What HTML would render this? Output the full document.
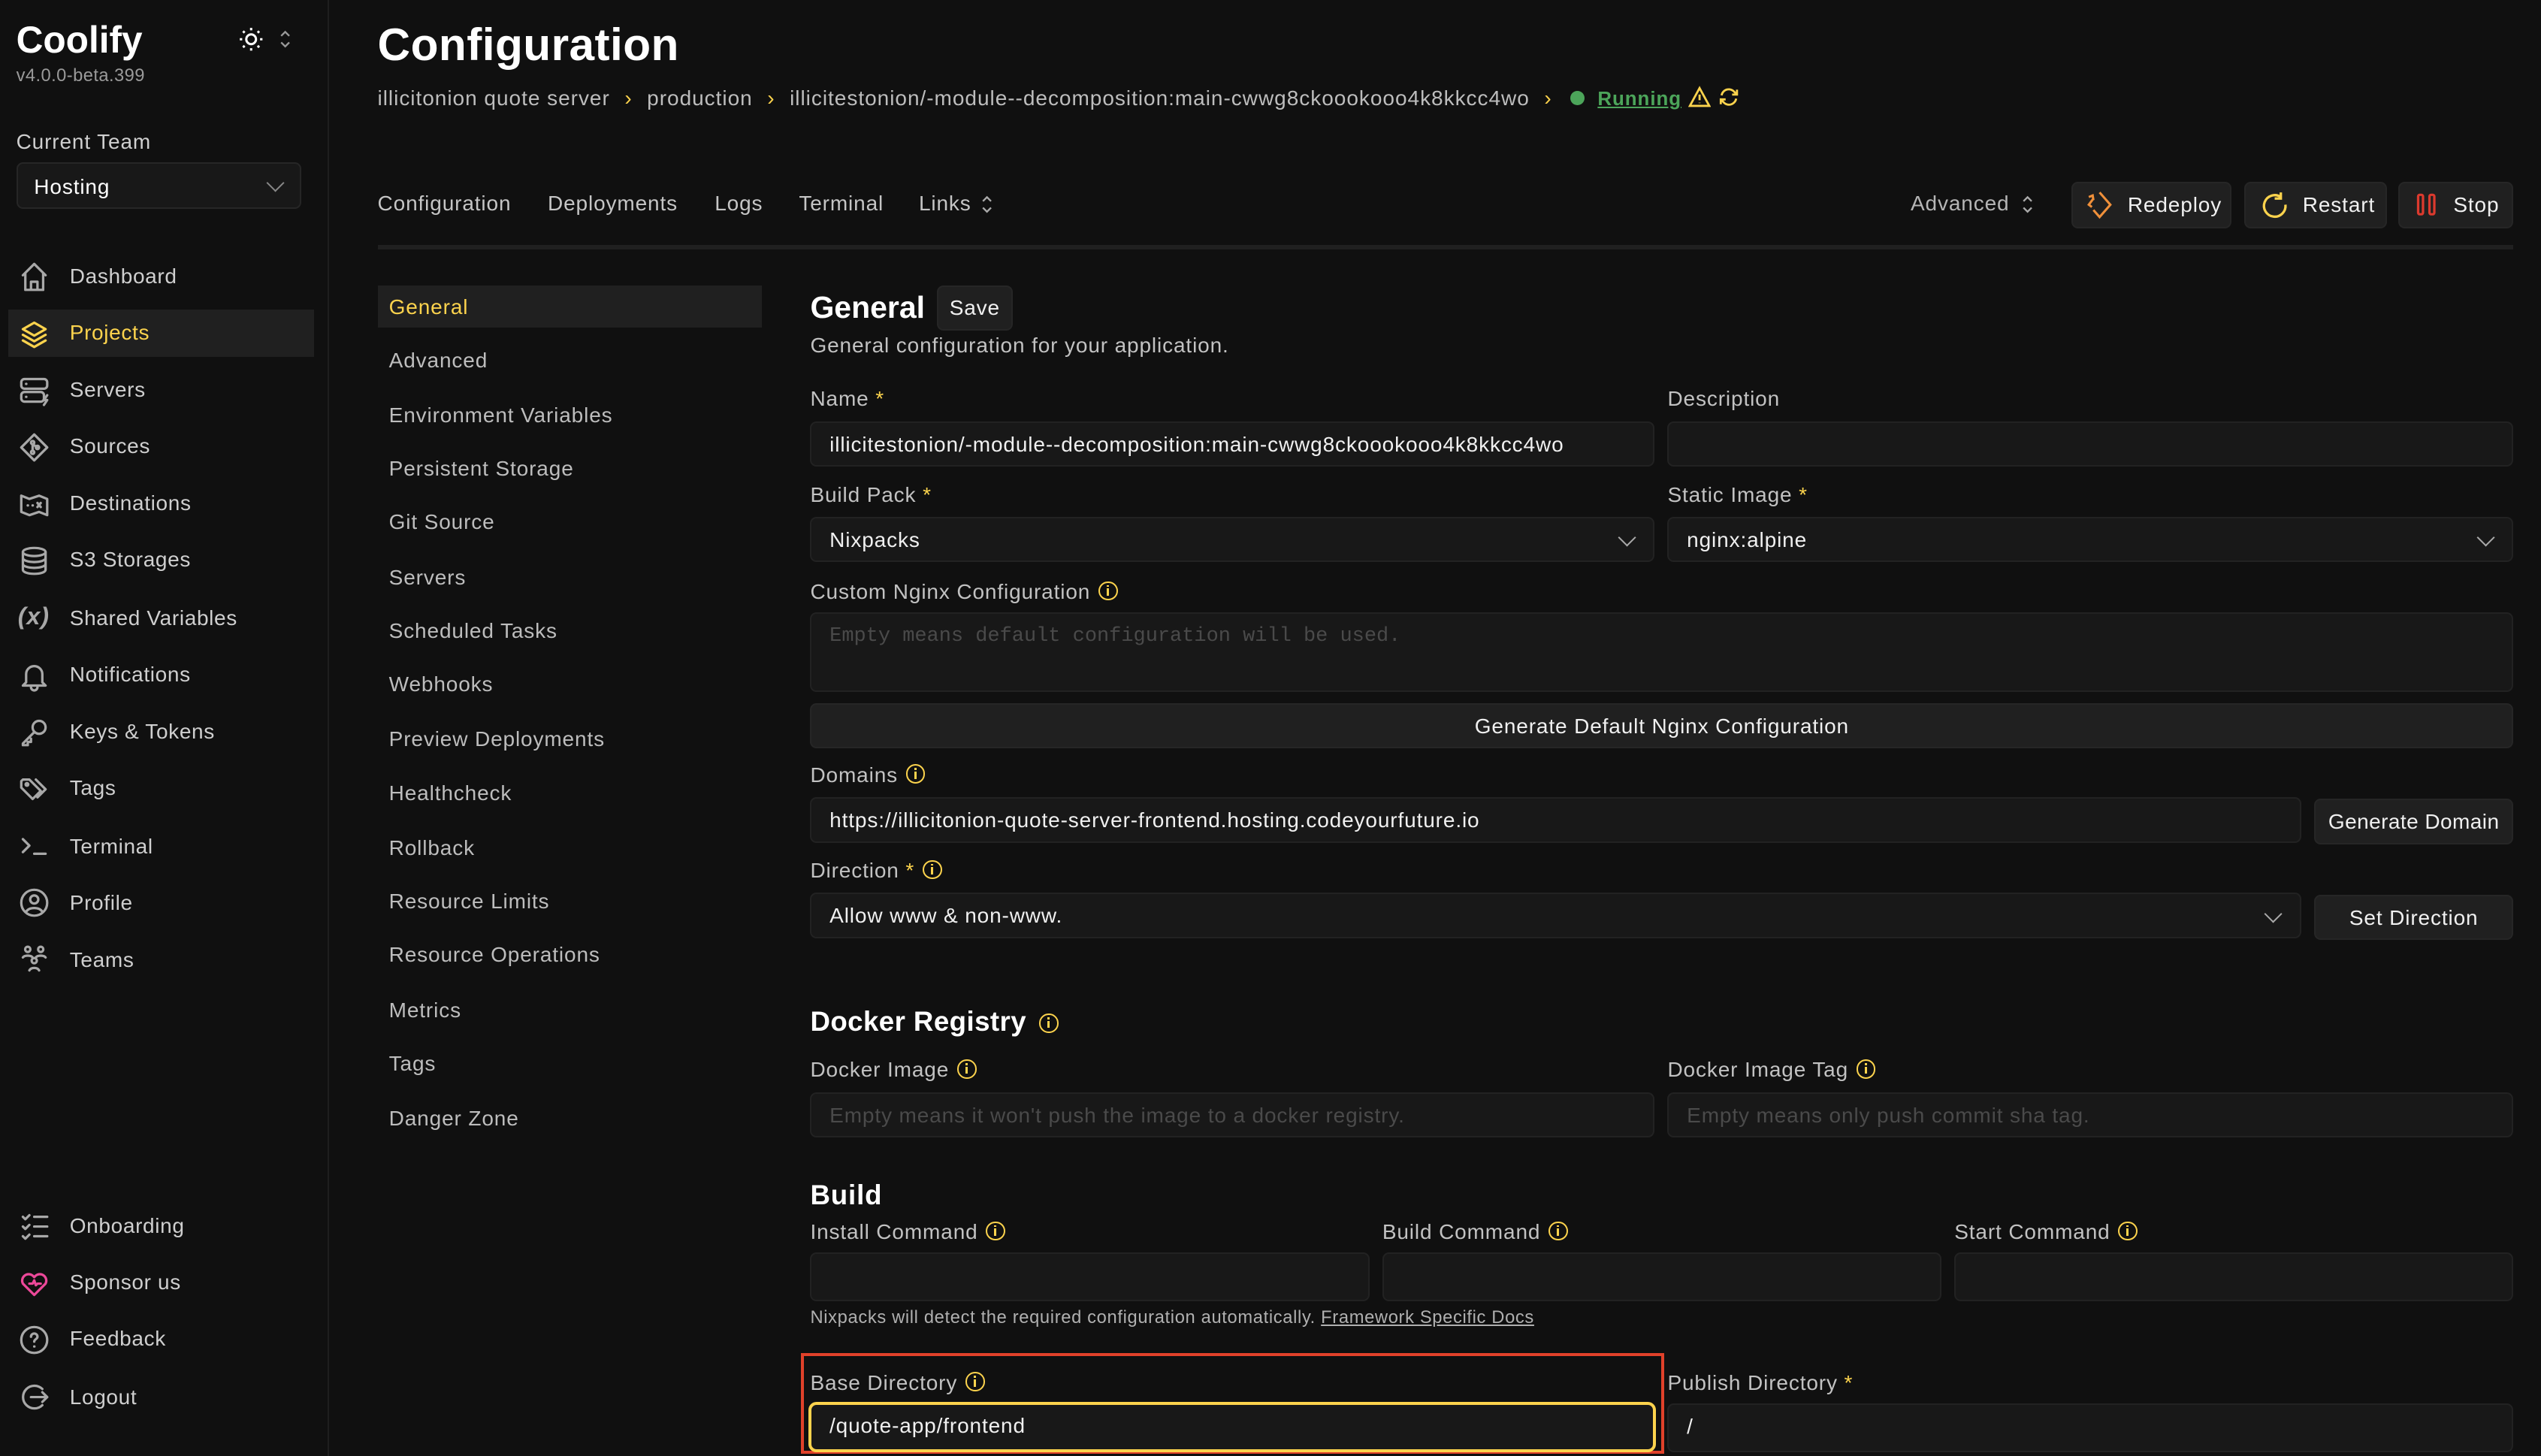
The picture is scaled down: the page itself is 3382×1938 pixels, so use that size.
<!DOCTYPE html>
<html><head><meta charset="utf-8"><style>
html,body{margin:0;padding:0;background:#101010;width:3382px;height:1938px;overflow:hidden}
#w{position:relative;width:1568px;height:899px;zoom:2.15689;font-family:"Liberation Sans",sans-serif;color:#e5e5e5;font-size:13px;letter-spacing:.4px}
.a{position:absolute;white-space:nowrap}
.side{position:absolute;left:0;top:0;width:202px;height:899px;border-right:1px solid #1e1e1e}
.nav{position:absolute;left:43px;font-size:13px;color:#cfcfcf;letter-spacing:.3px}
.ic{position:absolute;left:11px;width:20px;height:20px}
.ic svg{width:20px;height:20px;fill:none;stroke:#a8a8a8;stroke-width:1.5;stroke-linecap:round;stroke-linejoin:round}
.sub{position:absolute;left:240px;font-size:13px;color:#bdbdbd}
.lbl{position:absolute;font-size:13px;color:#c2c2c2}
.st{color:#fcd34d}
.inp{position:absolute;height:28px;background:#181818;border:1px solid #222;border-radius:4px;box-sizing:border-box;padding-left:11px;line-height:27px;font-size:13px;color:#f0f0f0;overflow:hidden;white-space:nowrap}
.ph{color:#4a4a4a}
.btn{position:absolute;background:#202020;border:1px solid #262626;border-radius:4px;box-sizing:border-box;font-size:13px;color:#f0f0f0;text-align:center}
.i{display:inline-block;width:10px;height:10px;border:1.3px solid #fcd34d;border-radius:50%;vertical-align:-1px;margin-left:5px;position:relative}
.i:after{content:"";position:absolute;left:4.2px;top:3.5px;width:1.3px;height:4.5px;background:#fcd34d}
.i:before{content:"";position:absolute;left:4.2px;top:1.3px;width:1.3px;height:1.3px;background:#fcd34d}
.chev{position:absolute;width:7px;height:7px;border-right:1.3px solid #aaa;border-bottom:1.3px solid #aaa;transform:rotate(45deg)}
</style></head><body><div id="w">
<div class="side">
 <div class="a" style="left:10px;top:11px;font-size:23px;font-weight:bold;color:#fff;letter-spacing:0">Coolify</div>
 <div class="a" style="left:10px;top:41px;font-size:11px;color:#9a9a9a;letter-spacing:.2px">v4.0.0-beta.399</div>
 <svg class="a" style="left:147px;top:16px" width="16" height="16" viewBox="0 0 16 16" fill="none" stroke="#fff" stroke-width="1.4"><circle cx="8" cy="8" r="3"/><path d="M8 1v1.5M8 13.5V15M1 8h1.5M13.5 8H15M3 3l1 1M12 12l1 1M3 13l1-1M12 4l1-1"/></svg>
 <svg class="a" style="left:172px;top:17px" width="8" height="14" viewBox="0 0 8 14" fill="none" stroke="#999" stroke-width="1.1"><path d="M1.5 5L4 2.5 6.5 5M1.5 9L4 11.5 6.5 9"/></svg>
 <div class="a" style="left:10px;top:80px;font-size:13px;color:#cfcfcf">Current Team</div>
 <div class="a" style="left:10px;top:100px;width:176px;height:29px;background:#181818;border:1px solid #262626;border-radius:4px;box-sizing:border-box"></div>
 <div class="a" style="left:21px;top:108px;font-size:13px;color:#fff">Hosting</div>
 <div class="chev" style="left:166px;top:109px;border-color:#888"></div>
 <div class="a" style="left:5px;top:191px;width:189px;height:29px;background:#202020"></div>

 <div class="ic" style="top:161px"><svg viewBox="0 0 20 20"><path d="M3 9l7-7 7 7M4.5 8v10h11V8M8 18v-5h4v5"/></svg></div><div class="nav" style="top:163px">Dashboard</div>
 <div class="ic" style="top:196px"><svg viewBox="0 0 20 20" style="stroke:#fcd34d"><path d="M10 3l7 4-7 4-7-4z M3 10.5l7 4 7-4M3 14l7 4 7-4"/></svg></div><div class="nav" style="top:198px;color:#fcd34d">Projects</div>
 <div class="ic" style="top:231px"><svg viewBox="0 0 20 20"><rect x="2" y="3" width="16" height="6" rx="2"/><rect x="2" y="11" width="14" height="6" rx="2"/><path d="M5 6h.1M5 14h.1M18 13l-2 3h2l-2 3"/></svg></div><div class="nav" style="top:233px">Servers</div>
 <div class="ic" style="top:266px"><svg viewBox="0 0 20 20"><path d="M10 2l8 8-8 8-8-8z"/><circle cx="9" cy="7" r="1"/><circle cx="9" cy="13" r="1"/><circle cx="12" cy="10" r="1"/><path d="M9 8v4M9 8l3 2"/></svg></div><div class="nav" style="top:268px">Sources</div>
 <div class="ic" style="top:301px"><svg viewBox="0 0 20 20"><path d="M2 5l5 2 6-2 5 2v10l-5-2-6 2-5-2z M6 11h.1M9 11h.1M12 9.5l2 2.5M14 9.5l-2 2.5"/></svg></div><div class="nav" style="top:303px">Destinations</div>
 <div class="ic" style="top:336px"><svg viewBox="0 0 20 20"><ellipse cx="10" cy="4.5" rx="7" ry="2.5"/><path d="M3 4.5v11c0 1.4 3 2.5 7 2.5s7-1.1 7-2.5v-11M3 8.2c0 1.4 3 2.5 7 2.5s7-1.1 7-2.5M3 11.8c0 1.4 3 2.5 7 2.5s7-1.1 7-2.5"/></svg></div><div class="nav" style="top:338px">S3 Storages</div>
 <div class="a" style="left:11px;top:372px;font-size:15px;font-weight:bold;color:#a8a8a8;font-style:italic">(x)</div><div class="nav" style="top:374px">Shared Variables</div>
 <div class="ic" style="top:407px"><svg viewBox="0 0 20 20"><path d="M5 14V9a5 5 0 0110 0v5l2 2H3zM8 17a2 2 0 004 0"/></svg></div><div class="nav" style="top:409px">Notifications</div>
 <div class="ic" style="top:442px"><svg viewBox="0 0 20 20"><circle cx="13" cy="7" r="4"/><path d="M10 10l-7 7v1h3v-2h2v-2"/></svg></div><div class="nav" style="top:444px">Keys &amp; Tokens</div>
 <div class="ic" style="top:477px"><svg viewBox="0 0 20 20"><path d="M2 5v4l7 7 5-5-7-7H3zM11 4l6 6-5 5"/><circle cx="5.5" cy="7" r=".8"/></svg></div><div class="nav" style="top:479px">Tags</div>
 <div class="ic" style="top:512px"><svg viewBox="0 0 20 20"><path d="M3 6l4 4-4 4M10 15h7"/></svg></div><div class="nav" style="top:515px">Terminal</div>
 <div class="ic" style="top:547px"><svg viewBox="0 0 20 20"><circle cx="10" cy="10" r="8"/><circle cx="10" cy="8" r="2.5"/><path d="M5 15.5c2-3 8-3 10 0"/></svg></div><div class="nav" style="top:550px">Profile</div>
 <div class="ic" style="top:582px"><svg viewBox="0 0 20 20"><circle cx="6" cy="4" r="1.6"/><circle cx="14" cy="4" r="1.6"/><circle cx="10" cy="11" r="1.6"/><path d="M3 9c1-1.5 5-1.5 6 0M11 9c1-1.5 5-1.5 6 0M7 17c1-2 5-2 6 0"/></svg></div><div class="nav" style="top:585px">Teams</div>

 <div class="ic" style="top:747px"><svg viewBox="0 0 20 20"><path d="M3 4l1.5 1.5L7 3M3 10l1.5 1.5L7 9M3 16l1.5 1.5L7 15M10 4h8M10 10h8M10 16h8"/></svg></div><div class="nav" style="top:749px">Onboarding</div>
 <div class="ic" style="top:782px"><svg viewBox="0 0 20 20" style="stroke:#ec4899"><path d="M10 17l-7-7a4 4 0 016-5l1 1 1-1a4 4 0 016 5zM7 10h2l1-2 1 3 1-1h2"/></svg></div><div class="nav" style="top:784px">Sponsor us</div>
 <div class="ic" style="top:817px"><svg viewBox="0 0 20 20"><circle cx="10" cy="10" r="8"/><path d="M8 8a2 2 0 114 0c0 1.5-2 1.5-2 3M10 14h.1"/></svg></div><div class="nav" style="top:819px">Feedback</div>
 <div class="ic" style="top:852px"><svg viewBox="0 0 20 20"><path d="M15 5a7 7 0 100 10M8 10h10M15 7l3 3-3 3"/></svg></div><div class="nav" style="top:855px">Logout</div>
</div>

<div class="a" style="left:233px;top:11px;font-size:28px;font-weight:bold;color:#fff;letter-spacing:.2px">Configuration</div>
<div class="a" style="left:233px;top:53px;font-size:13px;color:#bdbdbd;letter-spacing:.45px">illicitonion quote server <span style="color:#fcd34d;margin:0 5px">›</span> production <span style="color:#fcd34d;margin:0 5px">›</span> illicitestonion/-module--decomposition:main-cwwg8ckoookooo4k8kkcc4wo <span style="color:#fcd34d;margin:0 5px">›</span> <span style="display:inline-block;width:9px;height:9px;border-radius:50%;background:#4ca55a;vertical-align:0;margin:0 4px 0 2px"></span> <b style="color:#4ca55a;text-decoration:underline;font-size:12px">Running</b> <svg style="vertical-align:-2px" width="14" height="14" viewBox="0 0 14 14" fill="none" stroke="#fcd34d" stroke-width="1.3"><path d="M7 1.5l6 11H1z M7 5.5v3.5M7 10.5v.3"/></svg> <svg style="vertical-align:-2px" width="14" height="14" viewBox="0 0 14 14" fill="none" stroke="#fcd34d" stroke-width="1.3"><path d="M2.5 6a4.5 4.5 0 018-2l1.5 1.5M11.5 8a4.5 4.5 0 01-8 2L2 8.5M12 2.5v3H9M2 11.5v-3h3"/></svg></div>

<div class="a" style="left:233px;top:118px;color:#c5c5c5">Configuration</div>
<div class="a" style="left:338px;top:118px;color:#c5c5c5">Deployments</div>
<div class="a" style="left:441px;top:118px;color:#c5c5c5">Logs</div>
<div class="a" style="left:493px;top:118px;color:#c5c5c5">Terminal</div>
<div class="a" style="left:567px;top:118px;color:#c5c5c5">Links</div>
<svg class="a" style="left:605px;top:119px" width="8" height="14" viewBox="0 0 8 14" fill="none" stroke="#aaa" stroke-width="1.1"><path d="M1.5 5L4 2.5 6.5 5M1.5 9L4 11.5 6.5 9"/></svg>
<div class="a" style="left:1179px;top:118px;color:#b5b5b5">Advanced</div>
<svg class="a" style="left:1247px;top:119px" width="8" height="14" viewBox="0 0 8 14" fill="none" stroke="#aaa" stroke-width="1.1"><path d="M1.5 5L4 2.5 6.5 5M1.5 9L4 11.5 6.5 9"/></svg>
<div class="btn" style="left:1278px;top:112px;width:99px;height:29px;line-height:27px;text-align:left;padding-left:34px">Redeploy</div>
<svg class="a" style="left:1286px;top:117px" width="19" height="19" viewBox="0 0 20 20" fill="none" stroke="#f0903a" stroke-width="1.5"><path d="M10 2l7 8-7 8-4-4.6M5 11.5L3 10l3-4M3 5l2.5-1L6 7"/></svg>
<div class="btn" style="left:1385px;top:112px;width:88px;height:29px;line-height:27px;text-align:left;padding-left:35px">Restart</div>
<svg class="a" style="left:1393px;top:117px" width="19" height="19" viewBox="0 0 20 20" fill="none" stroke="#fcd34d" stroke-width="1.6"><path d="M15 5a7 7 0 103 5M15 2v4h-4"/></svg>
<div class="btn" style="left:1480px;top:112px;width:71px;height:29px;line-height:27px;text-align:left;padding-left:33px">Stop</div>
<svg class="a" style="left:1489px;top:118px" width="16" height="16" viewBox="0 0 16 16" fill="none" stroke="#dc3a2e" stroke-width="1.5"><rect x="3" y="2" width="3" height="12" rx="1"/><rect x="10" y="2" width="3" height="12" rx="1"/></svg>
<div class="a" style="left:233px;top:151px;width:1318px;height:3px;background:#202020"></div>

<div class="a" style="left:233px;top:176px;width:237px;height:26px;background:#202020"></div>
<div class="sub" style="top:182px;color:#fcd34d">General</div>
<div class="sub" style="top:215px">Advanced</div>
<div class="sub" style="top:249px">Environment Variables</div>
<div class="sub" style="top:282px">Persistent Storage</div>
<div class="sub" style="top:315px">Git Source</div>
<div class="sub" style="top:349px">Servers</div>
<div class="sub" style="top:382px">Scheduled Tasks</div>
<div class="sub" style="top:415px">Webhooks</div>
<div class="sub" style="top:449px">Preview Deployments</div>
<div class="sub" style="top:482px">Healthcheck</div>
<div class="sub" style="top:516px">Rollback</div>
<div class="sub" style="top:549px">Resource Limits</div>
<div class="sub" style="top:582px">Resource Operations</div>
<div class="sub" style="top:616px">Metrics</div>
<div class="sub" style="top:649px">Tags</div>
<div class="sub" style="top:683px">Danger Zone</div>

<div class="a" style="left:500px;top:179px;font-size:19px;font-weight:bold;color:#fff;letter-spacing:0">General</div>
<div class="btn" style="left:578px;top:176px;width:47px;height:28px;line-height:26px">Save</div>
<div class="a" style="left:500px;top:206px;color:#c2c2c2">General configuration for your application.</div>

<div class="lbl" style="left:500px;top:239px">Name <span class="st">*</span></div>
<div class="lbl" style="left:1029px;top:239px">Description</div>
<div class="inp" style="left:500px;top:260px;width:521px">illicitestonion/-module--decomposition:main-cwwg8ckoookooo4k8kkcc4wo</div>
<div class="inp" style="left:1029px;top:260px;width:522px"></div>

<div class="lbl" style="left:500px;top:298px">Build Pack <span class="st">*</span></div>
<div class="lbl" style="left:1029px;top:298px">Static Image <span class="st">*</span></div>
<div class="inp" style="left:500px;top:319px;width:521px">Nixpacks</div>
<div class="chev" style="left:1000px;top:328px"></div>
<div class="inp" style="left:1029px;top:319px;width:522px">nginx:alpine</div>
<div class="chev" style="left:1530px;top:328px"></div>

<div class="lbl" style="left:500px;top:358px">Custom Nginx Configuration<span class="i"></span></div>
<div class="inp" style="left:500px;top:378px;width:1051px;height:49px;line-height:28px;font-family:'Liberation Mono',monospace;font-size:12.5px;letter-spacing:0"><span class="ph">Empty means default configuration will be used.</span></div>
<div class="btn" style="left:500px;top:434px;width:1051px;height:28px;line-height:27px">Generate Default Nginx Configuration</div>

<div class="lbl" style="left:500px;top:471px">Domains<span class="i"></span></div>
<div class="inp" style="left:500px;top:492px;width:920px">https://illicitonion-quote-server-frontend.hosting.codeyourfuture.io</div>
<div class="btn" style="left:1428px;top:493px;width:123px;height:28px;line-height:27px;letter-spacing:.2px">Generate Domain</div>

<div class="lbl" style="left:500px;top:530px">Direction <span class="st">*</span><span class="i"></span></div>
<div class="inp" style="left:500px;top:551px;width:920px">Allow www &amp; non-www.</div>
<div class="chev" style="left:1399px;top:560px"></div>
<div class="btn" style="left:1428px;top:552px;width:123px;height:28px;line-height:27px">Set Direction</div>

<div class="a" style="left:500px;top:621px;font-size:17px;font-weight:bold;color:#fff;letter-spacing:.2px">Docker Registry<span class="i" style="margin-left:8px"></span></div>
<div class="lbl" style="left:500px;top:653px">Docker Image<span class="i"></span></div>
<div class="lbl" style="left:1029px;top:653px">Docker Image Tag<span class="i"></span></div>
<div class="inp" style="left:500px;top:674px;width:521px"><span class="ph">Empty means it won't push the image to a docker registry.</span></div>
<div class="inp" style="left:1029px;top:674px;width:522px"><span class="ph">Empty means only push commit sha tag.</span></div>

<div class="a" style="left:500px;top:728px;font-size:17px;font-weight:bold;color:#fff">Build</div>
<div class="lbl" style="left:500px;top:753px">Install Command<span class="i"></span></div>
<div class="lbl" style="left:853px;top:753px">Build Command<span class="i"></span></div>
<div class="lbl" style="left:1206px;top:753px">Start Command<span class="i"></span></div>
<div class="inp" style="left:500px;top:773px;width:345px;height:30px"></div>
<div class="inp" style="left:853px;top:773px;width:345px;height:30px"></div>
<div class="inp" style="left:1206px;top:773px;width:345px;height:30px"></div>
<div class="a" style="left:500px;top:807px;font-size:11px;color:#b0b0b0;letter-spacing:.3px">Nixpacks will detect the required configuration automatically. <span style="text-decoration:underline">Framework Specific Docs</span></div>

<div class="a" style="left:494px;top:835px;width:533px;height:62px;border:2px solid #e0412a;box-sizing:border-box"></div>
<div class="lbl" style="left:500px;top:846px">Base Directory<span class="i"></span></div>
<div class="lbl" style="left:1029px;top:846px">Publish Directory <span class="st">*</span></div>
<div class="inp" style="left:499px;top:865px;width:523px;height:31px;border:2px solid #fcd34d;border-radius:5px;line-height:26px">/quote-app/frontend</div>
<div class="inp" style="left:1029px;top:866px;width:522px;height:30px">/</div>
</div></body></html>
